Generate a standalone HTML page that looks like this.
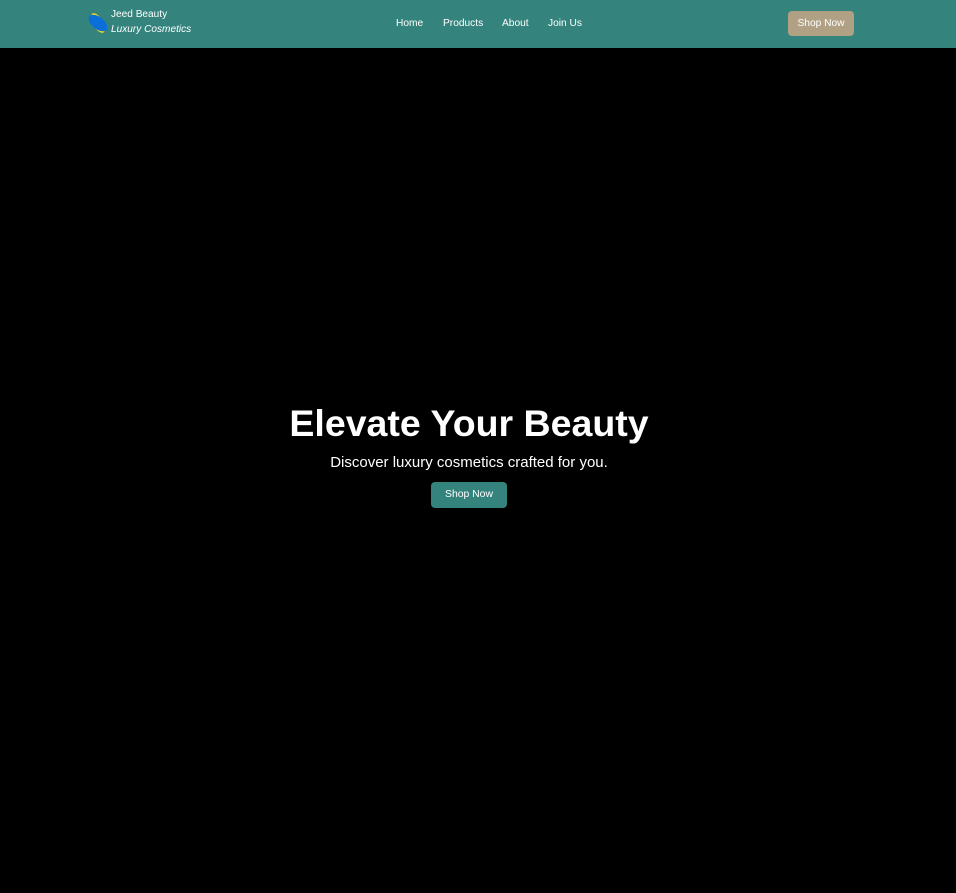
<!DOCTYPE html>
<html><head><style>
body{margin:0;width:956px;height:893px;background:#000;font-family:"Liberation Sans",sans-serif;overflow:hidden;position:relative}
.hdr{position:absolute;left:0;top:0;width:956px;height:48px;background:#34847d}
.logo{position:absolute;left:86px;top:11px}
.t1{position:absolute;left:111px;top:9px;color:#fff;font-size:10.1px}
.t2{position:absolute;left:111px;top:24px;color:#fff;font-size:10.1px;font-style:italic}
.nav a{position:absolute;top:18px;color:#fff;font-size:10.2px;text-decoration:none}
.btn{position:absolute;left:788px;top:11px;width:66px;height:25px;background:#b0a185;border-radius:4px;color:#fff;font-size:10.2px;text-align:center;line-height:25px}
h1{position:absolute;left:0;width:938px;top:402px;margin:0;text-align:center;color:#fff;font-size:37.5px;font-weight:bold}
p{position:absolute;left:0;width:938px;top:454px;margin:0;text-align:center;color:#fff;font-size:15px}
.b2{position:absolute;left:431px;top:482px;width:76px;height:26px;background:#34847d;border-radius:4px;color:#fff;font-size:10.4px;text-align:center;line-height:26px}
</style></head><body>
<div class="hdr">
<svg class="logo" width="26" height="26" viewBox="0 0 26 26"><ellipse cx="12" cy="12" rx="5" ry="11" fill="#f2d61b" transform="rotate(-30 12 12)"/><ellipse cx="12" cy="12" rx="11" ry="6" fill="#0a6fd8" transform="rotate(38 12 12)"/></svg>
<div class="t1">Jeed Beauty</div><div class="t2">Luxury Cosmetics</div>
<div class="nav"><a style="left:396px">Home</a><a style="left:443px">Products</a><a style="left:502px">About</a><a style="left:548px">Join Us</a></div>
<div class="btn">Shop Now</div>
</div>
<h1>Elevate Your Beauty</h1>
<p>Discover luxury cosmetics crafted for you.</p>
<div class="b2">Shop Now</div>
</body></html>
